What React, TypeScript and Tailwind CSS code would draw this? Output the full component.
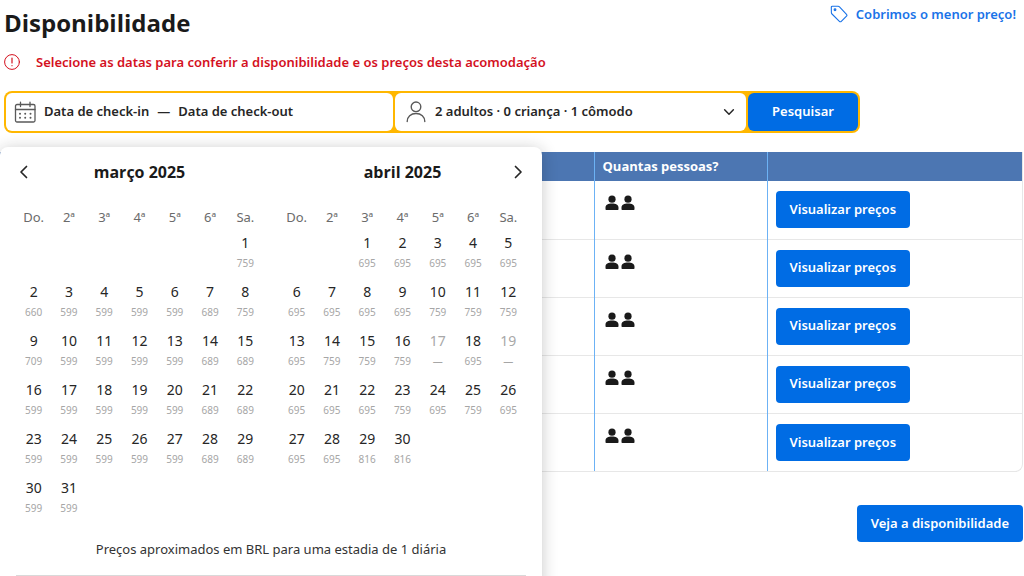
type Day = { day: number; price: string };

const WEEKDAYS = ["Do.", "2ª", "3ª", "4ª", "5ª", "6ª", "Sa."];

const MARCH_PRICES = [
  "759",
  "660", "599", "599", "599", "599", "689", "759",
  "709", "599", "599", "599", "599", "689", "689",
  "599", "599", "599", "599", "599", "689", "689",
  "599", "599", "599", "599", "599", "689", "689",
  "599", "599",
];

const APRIL_PRICES = [
  "695", "695", "695", "695", "695",
  "695", "695", "695", "695", "759", "759", "759",
  "695", "759", "759", "759", "—", "695", "—",
  "695", "695", "695", "759", "695", "759", "695",
  "695", "695", "816", "816",
];

function toWeeks(prices: string[], offset: number): (Day | null)[][] {
  const cells: (Day | null)[] = [
    ...Array<null>(offset).fill(null),
    ...prices.map((price, i) => ({ day: i + 1, price })),
  ];
  while (cells.length % 7 !== 0) cells.push(null);
  const weeks: (Day | null)[][] = [];
  for (let i = 0; i < cells.length; i += 7) weeks.push(cells.slice(i, i + 7));
  return weeks;
}

function Chevron({ className, d }: { className: string; d: string }) {
  return (
    <svg viewBox="0 0 16 16" className={className} fill="none" stroke="currentColor" strokeWidth="1.7" strokeLinecap="round" strokeLinejoin="round" aria-hidden="true">
      <path d={d} />
    </svg>
  );
}

function Month({ title, weeks }: { title: string; weeks: (Day | null)[][] }) {
  return (
    <table className="w-full table-fixed text-center">
      <caption className="pb-5 font-['Open_Sans',sans-serif] text-base leading-6 font-bold text-[#1a1a1a]">{title}</caption>
      <thead>
        <tr>
          {WEEKDAYS.map((name) => (
            <th key={name} scope="col" className="h-[29px] p-0 pb-1 text-[13px] leading-5 font-normal whitespace-nowrap text-[#6b6b6b]">
              {name}
            </th>
          ))}
        </tr>
      </thead>
      <tbody>
        {weeks.map((week, w) => (
          <tr key={w}>
            {week.map((cell, d) => (
              <td key={d} className="h-[49px] p-0 align-top">
                {cell && (
                  <button
                    type="button"
                    disabled={cell.price === "—"}
                    className="flex w-full flex-col items-center text-[#262626] disabled:text-[#a8a8a8]"
                  >
                    <span className="text-sm leading-5">{cell.day}</span>
                    <span className="text-[10px] leading-5 text-[#a6a6a6]">{cell.price}</span>
                  </button>
                )}
              </td>
            ))}
          </tr>
        ))}
      </tbody>
    </table>
  );
}

function Calendar() {
  return (
    <div className="absolute top-full -left-1 z-10 mt-3.5 w-[542px] rounded-lg bg-white px-4 pt-[13px] pb-4 font-normal shadow-[0_2px_16px_rgba(26,26,26,0.24)]">
      <div className="relative flex items-start gap-4">
        <button type="button" aria-label="Mês anterior" className="absolute top-1 left-0">
          <Chevron className="size-4" d="M10.5 2.5 5 8l5.5 5.5" />
        </button>
        <Month title="março 2025" weeks={toWeeks(MARCH_PRICES, 6)} />
        <Month title="abril 2025" weeks={toWeeks(APRIL_PRICES, 2)} />
        <button type="button" aria-label="Próximo mês" className="absolute top-1 right-0">
          <Chevron className="size-4" d="M5.5 2.5 11 8l-5.5 5.5" />
        </button>
      </div>
      <p className="pt-3 pb-4 text-center text-[13px] leading-5 text-[#333]">
        Preços aproximados em BRL para uma estadia de 1 diária
      </p>
      <hr className="border-[#d9d9d9]" />
    </div>
  );
}

function Person() {
  return (
    <svg viewBox="0 0 14 16" className="h-4 w-3.5" fill="currentColor" aria-hidden="true">
      <circle cx="7" cy="4.2" r="3.6" />
      <path d="M.5 12.6C.5 10 3.2 8.6 7 8.6s6.5 1.4 6.500 4v1.600a.8.8 0 0 1-.8.8H1.300a.8.8 0 0 1-.8-.8z" />
    </svg>
  );
}

function SearchBar() {
  return (
    <form className="relative mr-[164px] ml-1 grid h-[42px] grid-cols-[387fr_351fr_110fr] gap-0.5 rounded-lg bg-[#ffb700] p-0.5 text-[13px] font-semibold text-[#262626]" onSubmit={(e) => e.preventDefault()}>
      <button type="button" className="flex items-center gap-2 rounded-md bg-white pl-2">
        <svg viewBox="0 0 22 22" className="size-[22px]" fill="none" stroke="#595959" strokeWidth="1.3" strokeLinecap="round" aria-hidden="true">
          <rect x="1.500" y="3.500" width="19.500" height="17.500" rx="1.500" />
          <path d="M1.500 8.500H21M6.500 1.200v4.300M16 1.200v4.300" />
          <path d="M6 12.800h.01M11.200 12.800h.01M16.500 12.800h.01M6 16.800h.01M11.200 16.800h.01M16.500 16.800h.01" strokeWidth="2" />
        </svg>
        <span>Data de check-in</span>
        <span>—</span>
        <span>Data de check-out</span>
      </button>
      <button type="button" className="flex items-center gap-2 rounded-md bg-white px-2.5">
        <svg viewBox="0 0 22 24" className="h-6 w-[22px]" fill="none" stroke="#595959" strokeWidth="1.4" strokeLinecap="round" aria-hidden="true">
          <circle cx="11" cy="6.8" r="4.8" />
          <path d="M2.200 21.500c0-4.600 3.600-8 8.800-8s8.800 3.400 8.800 8" />
        </svg>
        <span className="flex-1 text-left">2 adultos · 0 criança · 1 cômodo</span>
        <Chevron className="size-3.5" d="M3 5.5 8 10.5l5-5" />
      </button>
      <button type="submit" className="rounded-md bg-[#006ce4] text-white">
        Pesquisar
      </button>
      <Calendar />
    </form>
  );
}

function RoomsTable() {
  return (
    <div className="mr-px overflow-hidden rounded-b-lg border-r border-b border-[#e7e7e7]">
      <table className="w-full table-fixed border-collapse text-left">
        <thead>
          <tr className="h-[29px] bg-[#4c76b2] text-[13px] text-white">
            <th aria-label="Acomodação" />
            <th scope="col" className="w-[173px] border-l border-[#6cb2f5] px-2 font-['Open_Sans',sans-serif] font-bold">Quantas pessoas?</th>
            <th className="w-[255px] border-l border-[#6cb2f5]" aria-label="Preços" />
          </tr>
        </thead>
        <tbody>
          {[1, 2, 3, 4, 5].map((row) => (
            <tr key={row} className="h-[58px] border-[#e7e7e7] not-last:border-b">
              <td />
              <td className="border-l border-l-[#6cb2f5] px-2.5 pt-3.5 align-top">
                <div className="flex gap-0.5 text-[#1a1a1a]" role="img" aria-label="2 pessoas">
                  <Person />
                  <Person />
                </div>
              </td>
              <td className="border-l border-l-[#6cb2f5] px-2 align-middle">
                <button type="button" className="block h-[37px] rounded bg-[#006ce4] px-3.5 text-[13px] font-semibold text-white">
                  Visualizar preços
                </button>
              </td>
            </tr>
          ))}
        </tbody>
      </table>
    </div>
  );
}

export default function App() {
  return (
    <main className="relative min-h-screen overflow-hidden bg-white font-['Noto_Sans','Open_Sans',sans-serif] text-[#1a1a1a]">
      <header className="flex items-start justify-between pr-2 pl-1">
        <h1 className="pt-[7px] font-['Open_Sans',sans-serif] text-2xl leading-8 font-bold">Disponibilidade</h1>
        <a href="#preco" className="flex items-center gap-2 pt-1 text-[13px] leading-5 font-semibold text-[#1a73e8]">
          <svg viewBox="0 0 18 18" className="size-[18px]" fill="none" stroke="currentColor" strokeWidth="1.1" strokeLinejoin="round" aria-hidden="true">
            <path d="M1.300 2.200a1 1 0 0 1 1-1L8 1.200a2 2 0 0 1 1.500.6l7 7.500a1.300 1.300 0 0 1 0 1.800l-5.200 5.300a1.300 1.300 0 0 1-1.900 0L2 9a2 2 0 0 1-.6-1.300z" />
            <circle cx="5" cy="4.8" r=".9" fill="currentColor" />
          </svg>
          Cobrimos o menor preço!
        </a>
      </header>
      <p className="flex items-center gap-4 pt-[13px] pb-[19px] pl-1 text-[13px] leading-5 font-semibold text-[#d4111e]">
        <svg viewBox="0 0 16 16" className="size-4" fill="none" stroke="currentColor" strokeLinecap="round" aria-hidden="true">
          <circle cx="8" cy="8" r="7.4" />
          <path d="M8 4v5M8 11.500v.2" strokeWidth="1.2" />
        </svg>
        Selecione as datas para conferir a disponibilidade e os preços desta acomodação
      </p>
      <SearchBar />
      <div className="pt-[19px]">
        <RoomsTable />
      </div>
      <div className="flex justify-end pt-[33px] pr-px">
        <button type="button" className="h-[37px] rounded bg-[#006ce4] px-3.5 text-[13px] font-semibold text-white">
          Veja a disponibilidade
        </button>
      </div>
    </main>
  );
}
